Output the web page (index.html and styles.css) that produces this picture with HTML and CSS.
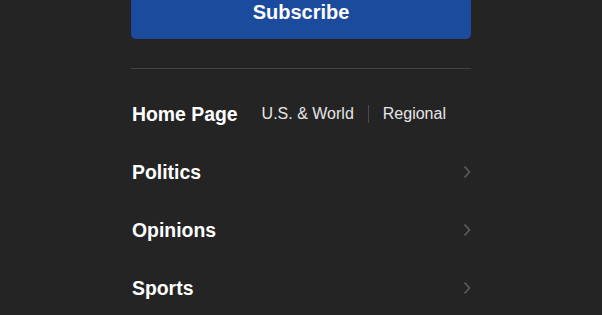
FILE: index.html
```html
<!DOCTYPE html>
<html>
<head>
  <meta charset="utf-8">
  <link rel="stylesheet" href="styles.css">
</head>
<body>
  <div class="menu">
    <a href="#" class="subscribe-btn">Subscribe</a>
    <div class="divider"></div>

    <div class="nav-row home-row">
      <a href="#" class="nav-title">Home Page</a>
      <div class="editions">
        <a href="#" class="edition">U.S. &amp; World</a>
        <span class="edition-sep"></span>
        <a href="#" class="edition">Regional</a>
      </div>
    </div>

    <div class="nav-row">
      <a href="#" class="nav-title">Politics</a>
      <svg class="chevron" width="8" height="14" viewBox="0 0 8 14"><path d="M1.5 1.5 L6.5 7 L1.5 12.5" fill="none" stroke="#5e5e5e" stroke-width="1.6"/></svg>
    </div>

    <div class="nav-row">
      <a href="#" class="nav-title">Opinions</a>
      <svg class="chevron" width="8" height="14" viewBox="0 0 8 14"><path d="M1.5 1.5 L6.5 7 L1.5 12.5" fill="none" stroke="#5e5e5e" stroke-width="1.6"/></svg>
    </div>

    <div class="nav-row">
      <a href="#" class="nav-title">Sports</a>
      <svg class="chevron" width="8" height="14" viewBox="0 0 8 14"><path d="M1.5 1.5 L6.5 7 L1.5 12.5" fill="none" stroke="#5e5e5e" stroke-width="1.6"/></svg>
    </div>
  </div>
</body>
</html>
```

FILE: styles.css
```css
body {
  margin: 0;
  background: #242424;
  font-family: "Liberation Sans", Arial, sans-serif;
  overflow: hidden;
}

.menu {
  width: 340px;
  margin: -11px auto 0 auto;
}

.subscribe-btn {
  display: flex;
  align-items: center;
  justify-content: center;
  height: 46px;
  padding-bottom: 4px;
  background: #1b4b9d;
  border-radius: 5px;
  color: #fff;
  font-size: 20px;
  font-weight: bold;
  text-decoration: none;
}

.divider {
  height: 1px;
  background: #434343;
  margin-top: 29px;
}

.nav-row {
  display: flex;
  align-items: center;
  justify-content: space-between;
  height: 58px;
  padding-left: 1px;
}

.home-row {
  justify-content: flex-start;
  margin-top: 16px;
}

.nav-title {
  color: #fff;
  font-size: 19.4px;
  font-weight: bold;
  text-decoration: none;
}

.editions {
  display: flex;
  align-items: center;
  margin-left: 24px;
}

.edition {
  color: #e6e6e6;
  font-size: 16px;
  text-decoration: none;
}

.edition-sep {
  width: 1px;
  height: 18px;
  background: #4a4a4a;
  margin: 0 14px;
}

.chevron {
  margin-right: 0;
}
```
